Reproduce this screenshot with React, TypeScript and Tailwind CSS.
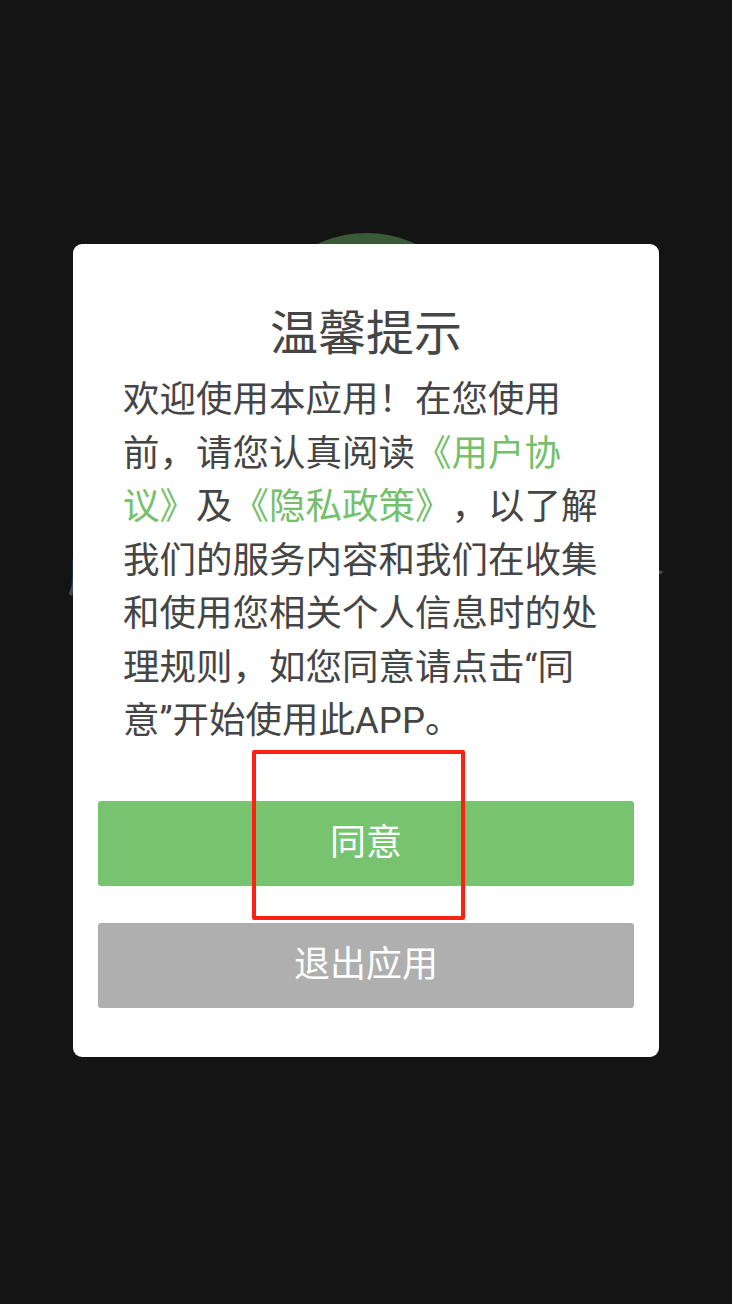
import React from 'react';

const App = () => {
  const linkClass = "text-[#74c06b]";

  return (
    <div className="relative w-[732px] h-[1304px] bg-[#141414] overflow-hidden font-[family-name:Roboto,'Noto_Sans_CJK_SC',sans-serif]">
      {/* 背景启动页 */}
      <div className="flex flex-col items-center pt-[233px]">
        <div className="w-[235px] h-[235px] rounded-full bg-[#3b5a37]"></div>
        <p className="mt-[84px] text-[46px] leading-[46px] text-[#4a4a4a] whitespace-nowrap">
          应用为您提供优质的内容服务
        </p>
      </div>

      {/* 弹窗 */}
      <div className="absolute left-[73px] top-[244px] w-[586px] bg-white rounded-[9px] pt-[61px] pb-[49px]">
        <h2 className="text-center text-[48px] leading-[58px] text-[#454545]">温馨提示</h2>
        <p className="mt-[10px] ml-[50px] w-[485px] text-[36.5px] leading-[53.5px] text-[#454545] [text-spacing-trim:space-all]">
          欢迎使用本应用！在您使用前，请您认真阅读<span className={linkClass}>《用户协议》</span>及<span className={linkClass}>《隐私政策》</span>，以了解我们的服务内容和我们在收集和使用您相关个人信息时的处理规则，如您同意请点击“同意”开始使用此APP。
        </p>
        <div className="mt-[53px] mx-[25px] flex flex-col gap-[37px]">
          <button className="h-[85px] rounded-[3px] bg-[#78c370] text-white text-[36px]">同意</button>
          <button className="h-[85px] rounded-[3px] bg-[#afafaf] text-white text-[36px]">退出应用</button>
        </div>
      </div>

      {/* 标注框 */}
      <div className="absolute left-[252px] top-[750px] w-[213px] h-[170px] border-[4px] border-[#ff2015] rounded-[2px]"></div>
    </div>
  );
};

export default App;
